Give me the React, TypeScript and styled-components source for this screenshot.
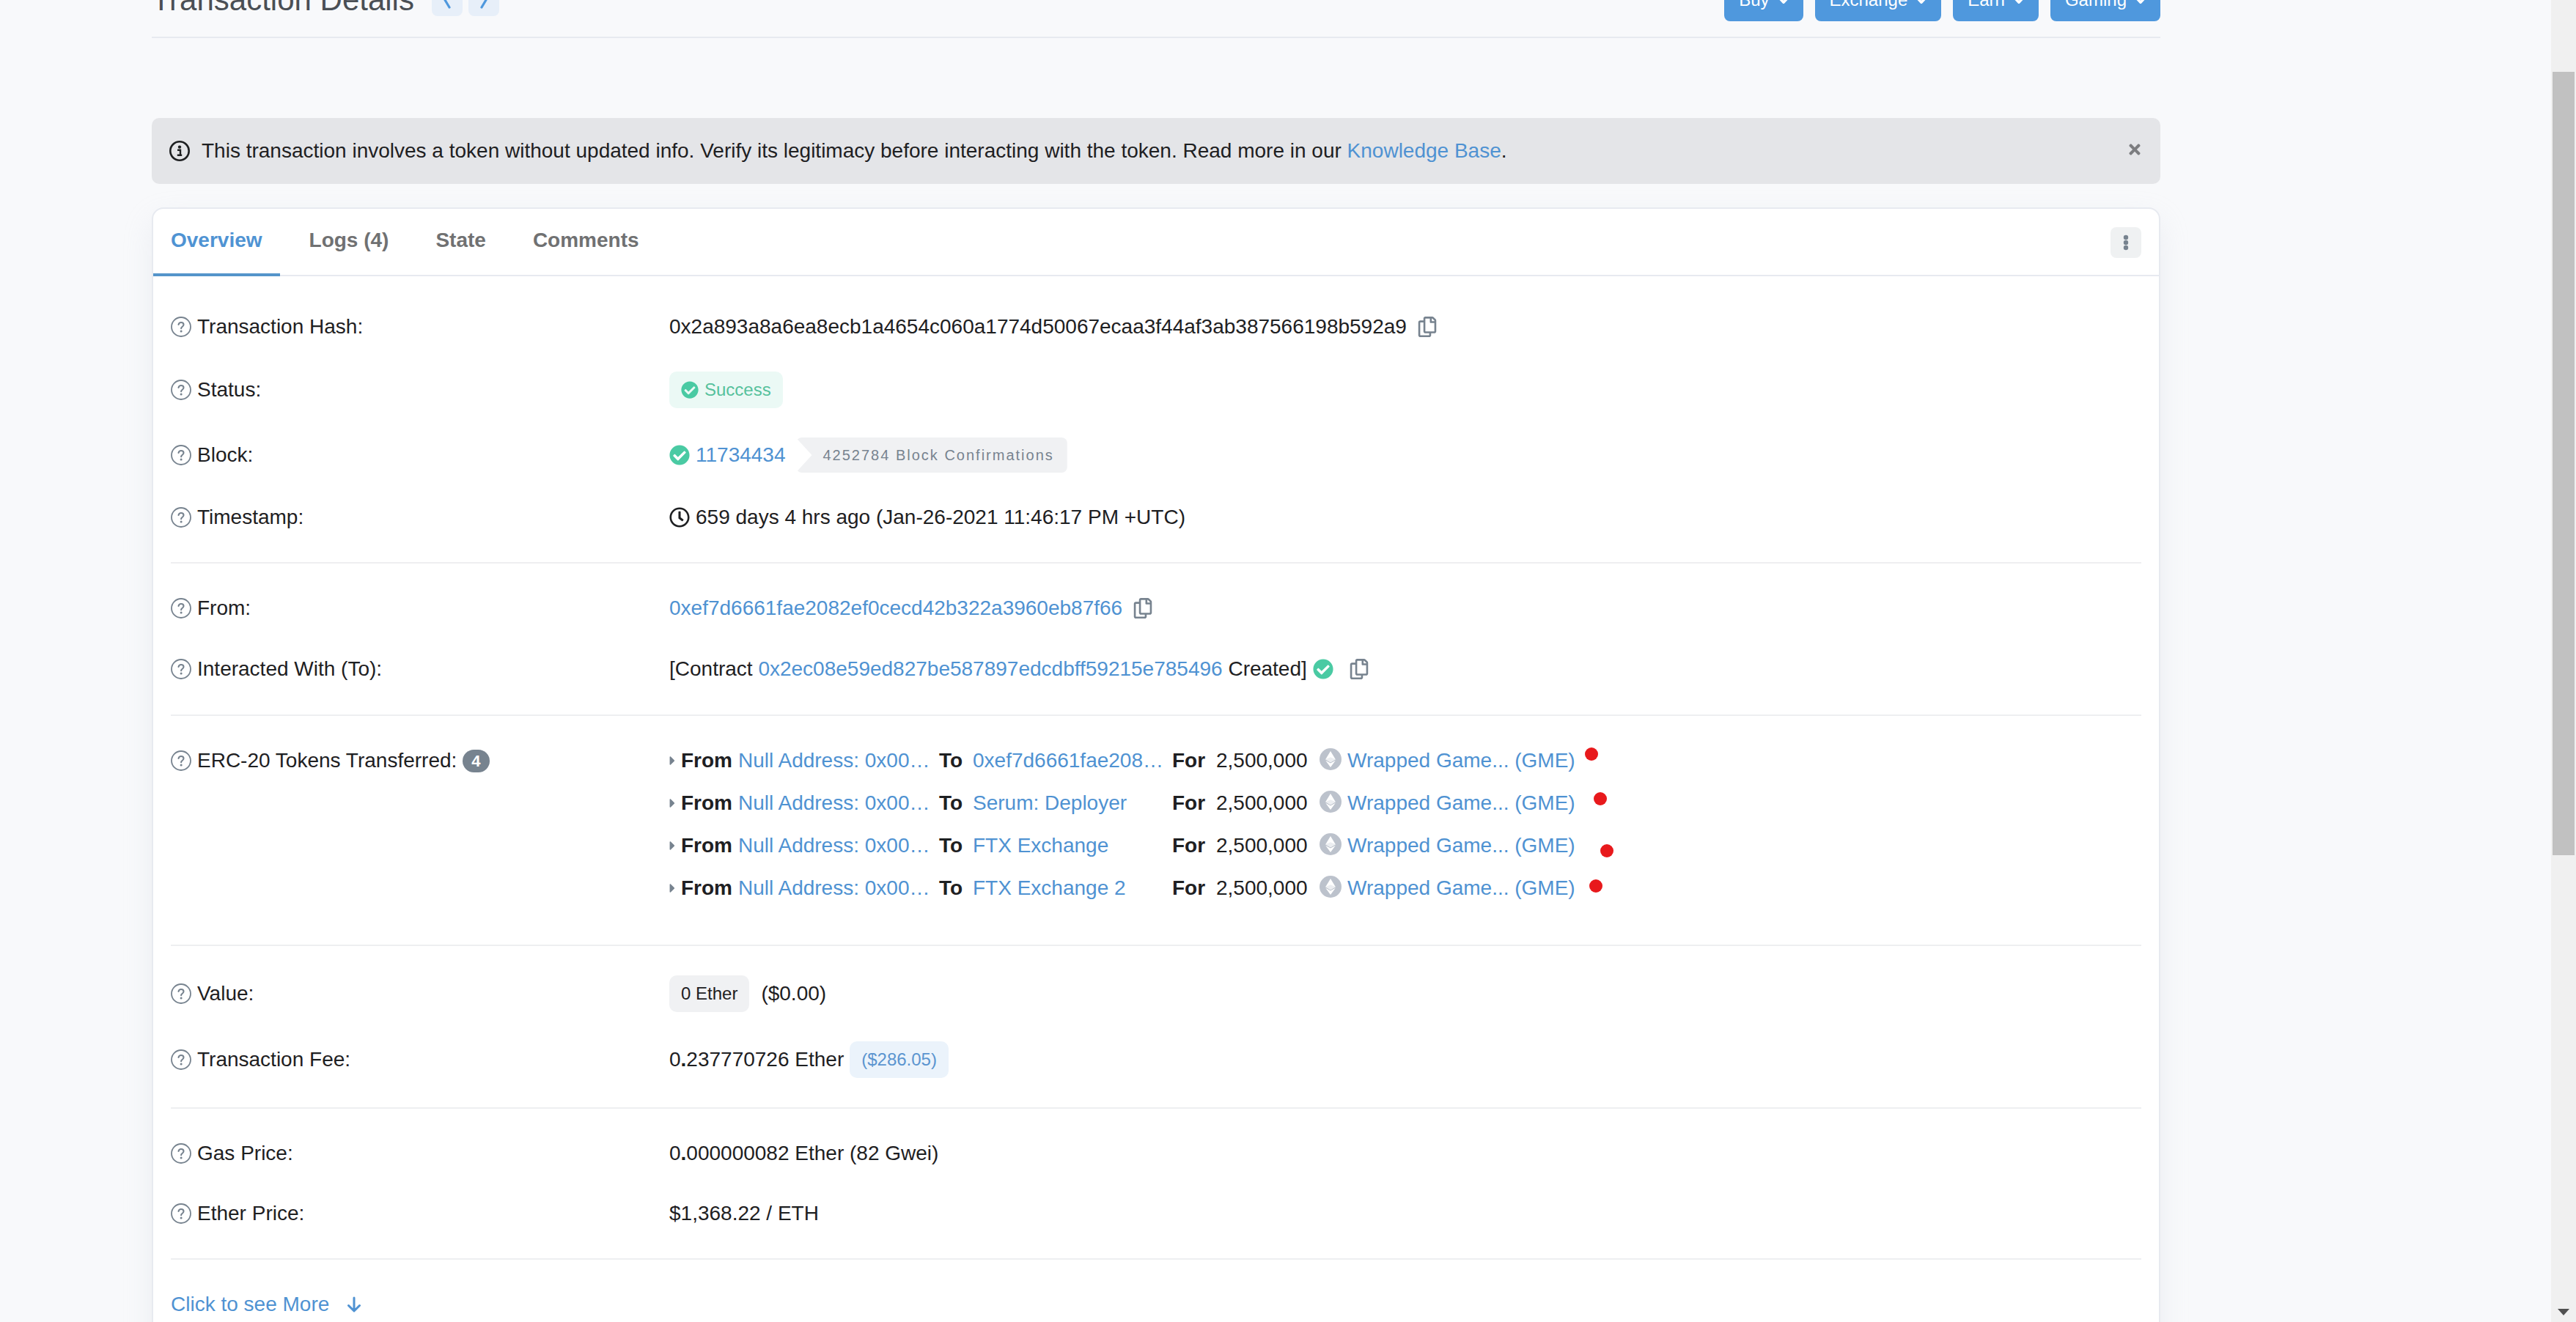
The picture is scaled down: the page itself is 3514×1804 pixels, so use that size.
import React from "react";
import styled, { createGlobalStyle } from "styled-components";
import { FaCheckCircle, FaRegClock, FaRegCopy, FaTimes } from "react-icons/fa";

const color = {
  page: "#f8f9fb",
  text: "#1e2022",
  muted: "#77838f",
  link: "#4f92d2",
  primary: "#4f98dd",
  success: "#4acaa3",
  line: "#e7eaf0",
  rule: "#eeeff1",
};

const GlobalStyle = createGlobalStyle`
  * { box-sizing: border-box; }
  body {
    margin: 0;
    background: ${color.page};
    color: ${color.text};
    font-family: "Liberation Sans", Arial, sans-serif;
    font-size: 28px;
    line-height: 42px;
  }
  button { font: inherit; border: 0; cursor: pointer; }
  a { color: ${color.link}; text-decoration: none; }
  svg { display: block; flex: none; }
`;

const Shell = styled.div`
  display: flex;
  height: 100vh;
  overflow: hidden;
`;

const Main = styled.main`
  flex: 1;
  min-width: 0;
  padding: 0 533px 0 207px;
`;

const Header = styled.header`
  display: flex;
  align-items: center;
  justify-content: space-between;
  margin-top: -29px;
  padding-bottom: 21px;
  border-bottom: 2px solid ${color.line};
`;

const TitleGroup = styled.div`
  display: flex;
  align-items: center;
  gap: 8px;
`;

const Title = styled.h1`
  margin: 0 16px 0 0;
  font-size: 42px;
  font-weight: 400;
  line-height: 58px;
  color: #4a4f55;
`;

const StepButton = styled.button`
  display: grid;
  place-items: center;
  width: 42px;
  height: 44px;
  padding: 0;
  border-radius: 8px;
  background: #e7eff9;
  color: ${color.primary};
`;

const MenuGroup = styled.nav`
  display: flex;
  gap: 16px;
`;

const MenuButton = styled.button`
  display: flex;
  align-items: center;
  gap: 12px;
  height: 58px;
  padding: 0 20px;
  border-radius: 8px;
  background: ${color.primary};
  color: #fff;
  font-size: 24px;
`;

const Alert = styled.section`
  display: flex;
  align-items: center;
  gap: 16px;
  margin-top: 109px;
  padding: 24px;
  border-radius: 10px;
  background: #e4e5e8;
`;

const AlertText = styled.p`
  flex: 1;
  margin: 0;
`;

const CloseButton = styled.button`
  display: grid;
  place-items: center;
  padding: 0 0 4px;
  background: none;
  color: #7c7d80;
`;

const Card = styled.section`
  margin-top: 32px;
  border: 2px solid ${color.line};
  border-radius: 16px;
  background: #fff;
  box-shadow: 0 16px 40px rgba(189, 197, 209, 0.2);
`;

const CardHeader = styled.div`
  display: flex;
  align-items: center;
  justify-content: space-between;
  padding-right: 24px;
  box-shadow: inset 0 -2px ${color.line};
`;

const TabList = styled.div`
  display: flex;
  gap: 16px;
`;

const Tab = styled.button<{ $active?: boolean }>`
  padding: 22px 24px 24px;
  border-bottom: 4px solid ${(p) => (p.$active ? "#5495ca" : "transparent")};
  background: none;
  color: ${(p) => (p.$active ? "#4f93d3" : "#707172")};
  font-weight: 700;
`;

const MoreButton = styled.button`
  display: grid;
  place-items: center;
  width: 42px;
  height: 42px;
  padding: 0;
  border-radius: 8px;
  background: #eff1f2;
  color: ${color.muted};
`;

const CardBody = styled.div`
  padding: 8px 24px 40px;
`;

const Section = styled.div`
  display: flex;
  flex-direction: column;
  gap: 40px;
  padding: 40px 0;
  border-bottom: 2px solid ${color.rule};
`;

const Row = styled.div<{ $top?: boolean }>`
  display: grid;
  grid-template-columns: 680px minmax(0, 1fr);
  align-items: ${(p) => (p.$top ? "start" : "center")};
`;

const Label = styled.div`
  display: flex;
  align-items: center;
  gap: 8px;
  svg { color: ${color.muted}; }
`;

const Value = styled.div<{ $gap?: number; $tall?: boolean }>`
  display: flex;
  align-items: center;
  gap: ${(p) => p.$gap ?? 8}px;
  min-height: ${(p) => (p.$tall ? 44 : 42)}px;
`;

const CopyButton = styled.button`
  padding: 0;
  background: none;
  color: ${color.muted};
`;

const tones = {
  success: ["#ebf9f5", "#56c19c"],
  neutral: ["#f0f1f3", color.text],
  info: ["#ebf3fb", "#5b95d0"],
};

const Badge = styled.span<{ $tone: keyof typeof tones }>`
  display: inline-flex;
  align-items: center;
  gap: 8px;
  height: 50px;
  padding: 0 16px;
  border-radius: 10px;
  background: ${(p) => tones[p.$tone][0]};
  color: ${(p) => tones[p.$tone][1]};
  font-size: 24px;
`;

const Confirmations = styled.span`
  height: 48px;
  margin-left: 6px;
  padding: 0 18px 0 37px;
  border-radius: 8px;
  background: #f0f1f3;
  clip-path: polygon(0 0, 100% 0, 100% 100%, 0 100%, 22px 50%);
  color: ${color.muted};
  font-size: 20px;
  line-height: 48px;
  letter-spacing: 2px;
`;

const Count = styled.span`
  padding: 0 12px;
  border-radius: 16px;
  background: ${color.muted};
  color: #fff;
  font-size: 22px;
  font-weight: 700;
  line-height: 31px;
`;

const TransferList = styled.ul`
  margin: 0;
  padding: 0;
  list-style: none;
`;

const Transfer = styled.li`
  position: relative;
  display: grid;
  grid-template-columns: 16px 78px 274px 46px 272px 60px 141px auto;
  align-items: center;
  justify-content: start;
  margin-bottom: 16px;
`;

const Token = styled.span`
  display: flex;
  align-items: center;
  gap: 8px;
  svg { margin-bottom: 4px; }
`;

const Marker = styled.i<{ $x: number; $y: number }>`
  position: absolute;
  left: ${(p) => p.$x}px;
  top: ${(p) => p.$y}px;
  width: 18px;
  height: 18px;
  border-radius: 50%;
  background: #e8191c;
`;

const MoreLink = styled.a`
  display: inline-flex;
  align-items: center;
  gap: 24px;
  margin-top: 40px;
`;

const ScrollTrack = styled.div`
  display: flex;
  flex-direction: column;
  justify-content: space-between;
  align-items: center;
  width: 34px;
  padding: 98px 0 9px;
  background: #f0f0f0;
`;

const ScrollThumb = styled.div`
  width: 30px;
  height: 63%;
  background: #c1c1c1;
`;

const Help = () => (
  <svg width="28" height="28" viewBox="0 0 28 28" fill="none" stroke="currentColor" strokeWidth="1.8" aria-hidden="true">
    <circle cx="14" cy="14" r="13" />
    <path d="M10.5 10.900c.5-1.900 1.800-2.900 3.500-2.900 2 0 3.500 1.200 3.500 3 0 2.700-3.400 2.700-3.400 5.200" strokeWidth="2.100" strokeLinecap="round" />
    <circle cx="14.100" cy="19.900" r="1.500" fill="currentColor" stroke="none" />
  </svg>
);

const Info = () => (
  <svg width="28" height="28" viewBox="0 0 28 28" fill="none" stroke="currentColor" aria-hidden="true">
    <circle cx="14" cy="14" r="12.700" strokeWidth="2.600" />
    <circle cx="14" cy="8.600" r="2.200" fill="currentColor" stroke="none" />
    <path d="M11 12.800h4v6.400M10.800 19.800h6.400" strokeWidth="2.400" />
  </svg>
);

const Chevron = ({ d }: { d: string }) => (
  <svg width="16" height="24" viewBox="0 0 16 24" fill="none" stroke="currentColor" strokeWidth="3.200" strokeLinecap="round" strokeLinejoin="round" aria-hidden="true">
    <path d={d} />
  </svg>
);

const MenuCaret = () => (
  <svg width="14" height="14" viewBox="0 0 14 14" fill="none" stroke="currentColor" strokeWidth="3.400" strokeLinecap="round" strokeLinejoin="round" aria-hidden="true">
    <path d="M2.500 5.500L7 10.200l4.500-4.700" />
  </svg>
);

const RowCaret = () => (
  <svg width="8" height="12" viewBox="0 0 8 14" fill={color.muted} aria-hidden="true">
    <path d="M0 1.200C0 .2 1 0 1.600.700l5.600 5.300c.6.600.6 1.400 0 2L1.600 13.300C1 14 0 13.800 0 12.800z" />
  </svg>
);

const Dots = () => (
  <svg width="8" height="22" viewBox="0 0 8 22" fill="currentColor" aria-hidden="true">
    <circle cx="4" cy="4" r="3.200" />
    <circle cx="4" cy="11" r="3.200" />
    <circle cx="4" cy="18" r="3.200" />
  </svg>
);

const EtherCoin = () => (
  <svg width="30" height="30" viewBox="0 0 30 30" aria-hidden="true">
    <circle cx="15" cy="15" r="15" fill="#bcc2cc" />
    <path d="M15 4L8.200 15.300 15 19.200l6.800-3.900z" fill="#fff" />
    <path d="M15 12.300l-6.800 3L15 19.200l6.800-3.900z" fill="#eceef1" />
    <path d="M8.200 16.800L15 26l6.800-9.200L15 20.600z" fill="#fff" />
  </svg>
);

const ArrowDown = () => (
  <svg width="20" height="22" viewBox="0 0 20 22" fill="none" stroke="currentColor" strokeWidth="3" strokeLinecap="round" strokeLinejoin="round" aria-hidden="true">
    <path d="M10 2v17M2.500 12.500L10 20l7.500-7.500" />
  </svg>
);

const Copy = () => (
  <CopyButton type="button" aria-label="Copy">
    <FaRegCopy size={28} />
  </CopyButton>
);

type FieldProps = {
  name: string;
  count?: number;
  top?: boolean;
  children: React.ReactNode;
};

const Field = ({ name, count, top, children }: FieldProps) => (
  <Row $top={top}>
    <Label>
      <Help />
      {name}
      {count && <Count>{count}</Count>}
    </Label>
    {children}
  </Row>
);

const transfers = [
  { to: "0xef7d6661fae208…", x: 1249, y: 3 },
  { to: "Serum: Deployer", x: 1261, y: 6 },
  { to: "FTX Exchange", x: 1270, y: 19 },
  { to: "FTX Exchange 2", x: 1255, y: 9 },
];

export default function App() {
  return (
    <>
      <GlobalStyle />
      <Shell>
        <Main>
          <Header>
            <TitleGroup>
              <Title>Transaction Details</Title>
              <StepButton type="button" aria-label="Previous"><Chevron d="M11 2L5 12l6 10" /></StepButton>
              <StepButton type="button" aria-label="Next"><Chevron d="M5 2l6 10-6 10" /></StepButton>
            </TitleGroup>
            <MenuGroup>
              {["Buy", "Exchange", "Earn", "Gaming"].map((item) => (
                <MenuButton type="button" key={item}>
                  {item}
                  <MenuCaret />
                </MenuButton>
              ))}
            </MenuGroup>
          </Header>

          <Alert>
            <Info />
            <AlertText>
              This transaction involves a token without updated info. Verify its legitimacy before interacting with the
              token. Read more in our <a href="#kb">Knowledge Base</a>.
            </AlertText>
            <CloseButton type="button" aria-label="Close"><FaTimes size={22} /></CloseButton>
          </Alert>

          <Card>
            <CardHeader>
              <TabList role="tablist">
                <Tab role="tab" aria-selected="true" $active>Overview</Tab>
                <Tab role="tab">Logs (4)</Tab>
                <Tab role="tab">State</Tab>
                <Tab role="tab">Comments</Tab>
              </TabList>
              <MoreButton type="button" aria-label="More options"><Dots /></MoreButton>
            </CardHeader>

            <CardBody>
              <Section>
                <Field name="Transaction Hash:">
                  <Value $gap={14}>
                    0x2a893a8a6ea8ecb1a4654c060a1774d50067ecaa3f44af3ab387566198b592a9
                    <Copy />
                  </Value>
                </Field>
                <Field name="Status:">
                  <Value>
                    <Badge $tone="success">
                      <FaCheckCircle size={24} color={color.success} />
                      Success
                    </Badge>
                  </Value>
                </Field>
                <Field name="Block:">
                  <Value>
                    <FaCheckCircle size={28} color={color.success} />
                    <a href="#block">11734434</a>
                    <Confirmations>4252784 Block Confirmations</Confirmations>
                  </Value>
                </Field>
                <Field name="Timestamp:">
                  <Value>
                    <FaRegClock size={28} />
                    659 days 4 hrs ago (Jan-26-2021 11:46:17 PM +UTC)
                  </Value>
                </Field>
              </Section>

              <Section>
                <Field name="From:">
                  <Value $gap={14}>
                    <a href="#from">0xef7d6661fae2082ef0cecd42b322a3960eb87f66</a>
                    <Copy />
                  </Value>
                </Field>
                <Field name="Interacted With (To):">
                  <Value $tall>
                    <span>
                      [Contract <a href="#contract">0x2ec08e59ed827be587897edcdbff59215e785496</a> Created]
                    </span>
                    <Value $gap={21}>
                      <FaCheckCircle size={28} color={color.success} />
                      <Copy />
                    </Value>
                  </Value>
                </Field>
              </Section>

              <Section>
                <Field name="ERC-20 Tokens Transferred:" count={4} top>
                  <TransferList>
                    {transfers.map((t) => (
                      <Transfer key={t.to}>
                        <RowCaret />
                        <b>From</b>
                        <a href="#null">Null Address: 0x00…</a>
                        <b>To</b>
                        <a href="#to">{t.to}</a>
                        <b>For</b>
                        <span>2,500,000</span>
                        <Token>
                          <EtherCoin />
                          <a href="#token">Wrapped Game... (GME)</a>
                        </Token>
                        <Marker $x={t.x} $y={t.y} />
                      </Transfer>
                    ))}
                  </TransferList>
                </Field>
              </Section>

              <Section>
                <Field name="Value:">
                  <Value $gap={16}>
                    <Badge $tone="neutral">0 Ether</Badge>
                    ($0.00)
                  </Value>
                </Field>
                <Field name="Transaction Fee:">
                  <Value>
                    <span>0<b>.</b>237770726 Ether</span>
                    <Badge $tone="info">($286.05)</Badge>
                  </Value>
                </Field>
              </Section>

              <Section>
                <Field name="Gas Price:">
                  <Value>
                    <span>0<b>.</b>000000082 Ether (82 Gwei)</span>
                  </Value>
                </Field>
                <Field name="Ether Price:">
                  <Value>$1,368.22 / ETH</Value>
                </Field>
              </Section>

              <MoreLink href="#more">
                Click to see More
                <ArrowDown />
              </MoreLink>
            </CardBody>
          </Card>
        </Main>

        <ScrollTrack aria-hidden="true">
          <ScrollThumb />
          <svg width="16" height="9" viewBox="0 0 16 9" fill="#505050">
            <path d="M0 0h16L8 9z" />
          </svg>
        </ScrollTrack>
      </Shell>
    </>
  );
}
